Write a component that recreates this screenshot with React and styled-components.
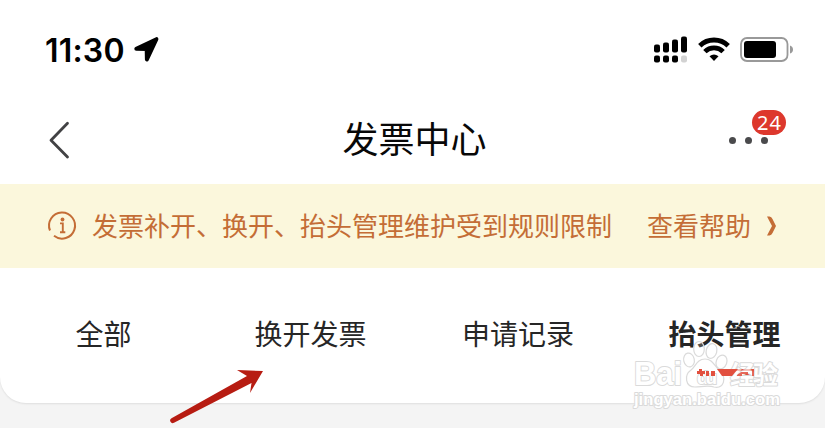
import React from "react";
import styled, { createGlobalStyle } from "styled-components";

const GlobalStyle = createGlobalStyle`
  * { box-sizing: border-box; }
  body {
    margin: 0;
    overflow: hidden;
    background: #f4f4f4;
    font-family: "Noto Sans CJK SC", sans-serif;
  }
`;

const Screen = styled.div`
  position: relative;
  width: 825px;
  height: 428px;
  overflow: hidden;
  background: #f4f4f4;
`;

const Sheet = styled.main`
  height: 403px;
  background: #fff;
  border-radius: 0 0 26px 26px;
  box-shadow: 0 1px 2px rgba(0, 0, 0, 0.09);
`;

const StatusBar = styled.div`
  display: flex;
  align-items: center;
  justify-content: space-between;
  height: 100px;
  padding: 0 31px 1px 45px;
`;

const StatusGroup = styled.div`
  display: flex;
  align-items: center;
`;

const Clock = styled.time`
  width: 80px;
  margin: 2px 9px 0 0;
  font: 600 32px/40px Inter, sans-serif;
  letter-spacing: 0.2px;
  white-space: nowrap;
  color: #000;
`;

const Icon = styled.svg`
  display: block;
  flex: none;
  overflow: visible;
`;

const WifiIcon = styled(Icon)`
  margin: 0 0 2px 11px;
`;

const BatteryIcon = styled(Icon)`
  margin-left: 10px;
`;

const NavBar = styled.header`
  display: grid;
  grid-template-columns: 120px 1fr 120px;
  align-items: center;
  height: 84px;
  padding-bottom: 4px;
`;

const BackButton = styled.button`
  width: 40px;
  margin-left: 48px;
  padding: 0;
  border: 0;
  background: none;
`;

const Title = styled.h1`
  margin: 0 0 6px 4px;
  font-size: 36px;
  font-weight: 400;
  line-height: 50px;
  text-align: center;
  color: #080808;
`;

const MoreButton = styled.button`
  position: relative;
  display: flex;
  gap: 9px;
  width: 60px;
  margin-left: 24px;
  padding: 0;
  border: 0;
  background: none;
`;

const Dot = styled.i`
  width: 7px;
  height: 7px;
  border-radius: 50%;
  background: #4a4a4c;
`;

const Badge = styled.span`
  position: absolute;
  left: 23px;
  top: -27px;
  width: 34px;
  height: 25px;
  border-radius: 13px;
  background: #dd382d;
  color: #fff;
  font: 400 20px/25px "Noto Sans", sans-serif;
  letter-spacing: 1px;
  text-indent: 1px;
  text-align: center;
`;

const Notice = styled.section`
  display: flex;
  align-items: center;
  height: 84px;
  padding-left: 47px;
  background: #fbf7dc;
  color: #c46d36;
  font-size: 26px;
  line-height: 40px;
  white-space: nowrap;
`;

const NoticeText = styled.span`
  width: 520px;
  margin: 0 35px 2px 15px;
`;

const HelpLink = styled.a`
  display: flex;
  align-items: center;
  gap: 16px;
  margin-bottom: 3px;
`;

const HelpChevron = styled(Icon)`
  margin-top: 3px;
`;

const Tabs = styled.nav`
  display: grid;
  grid-template-columns: 207px 207px 208px 205px;
  height: 135px;
  padding-top: 45px;
`;

const Tab = styled.div`
  display: flex;
  flex-direction: column;
  align-items: center;
  font-size: 28px;
  line-height: 40px;
  font-weight: ${(p) => (p.$active ? 700 : 400)};
  color: #262626;
`;

const Underline = styled.span`
  width: 57px;
  height: 7px;
  margin: 16px 0 0 2px;
  background: #e2503f;
`;

const Overlay = styled.svg`
  position: absolute;
  left: 0;
  top: 0;
  pointer-events: none;
`;

const MarkText = styled.text`
  font-family: ${(p) => (p.$cjk ? '"Noto Sans CJK SC"' : '"Liberation Sans"')}, sans-serif;
  font-size: ${(p) => p.$size}px;
  font-weight: 700;
  fill: #fff;
  stroke: #dadada;
  stroke-width: 2px;
  stroke-linejoin: round;
  paint-order: stroke;
`;

const tabs = ["全部", "换开发票", "申请记录", "抬头管理"];

function Signal() {
  const bars = [[0, 8], [9, 10], [18, 13], [27, 16]];
  return (
    <Icon width="33" height="27" viewBox="0 0 33 27">
      {bars.map(([x, h], i) => (
        <g key={x}>
          <rect x={x} y={16.5 - h} width="6" height={h} rx="2" />
          <rect x={x} y="19.5" width="6" height="7" rx="2" fill={i === 3 ? "#d2d2d2" : "#000"} />
        </g>
      ))}
    </Icon>
  );
}

function Wifi() {
  return (
    <WifiIcon width="32" height="24" viewBox="0 0 32 24">
      <g fill="none" stroke="#000" strokeWidth="4.8">
        <path d="M1.8 8.8A20.3 20.3 0 0 1 30.2 8.8" />
        <path d="M6.9 14.6A12.9 12.9 0 0 1 25.1 14.6" />
      </g>
      <path d="M11.5 19.3Q16 15.5 20.5 19.3L16 24Z" />
    </WifiIcon>
  );
}

function Battery() {
  return (
    <BatteryIcon width="54" height="25" viewBox="0 0 54 25">
      <rect x="1" y="1" width="46.5" height="23" rx="6" fill="none" stroke="#999" strokeWidth="1.8" />
      <rect x="4" y="4" width="32" height="17" rx="3" />
      <path d="M50 8.5q3 1 3 4t-3 4z" fill="#999" />
    </BatteryIcon>
  );
}

function Watermark() {
  return (
    <g>
      <MarkText x="634" y="385" $size="34" textLength="48" lengthAdjust="spacingAndGlyphs">Bai</MarkText>
      <g fill="#fff" stroke="#dadada" strokeWidth="1.2">
        <ellipse cx="689" cy="360" rx="5.3" ry="7" transform="rotate(-12 689 360)" />
        <ellipse cx="699" cy="349" rx="5.3" ry="7.5" fillOpacity="0.2" />
        <ellipse cx="711.5" cy="351" rx="5.3" ry="7.5" transform="rotate(14 711.5 351)" fillOpacity="0.2" />
        <ellipse cx="721.5" cy="362" rx="5.3" ry="7" transform="rotate(20 721.5 362)" />
        <path d="M705 359C697 359 696 366 691 370C684 375 685 387 695 387C701 387 708 385 714 387C724 389 727 378 720 371C714 366 713 359 705 359Z" />
      </g>
      <MarkText x="697" y="384" $size="19" textLength="20">du</MarkText>
      <MarkText x="730" y="384" $cjk $size="25" textLength="48">经验</MarkText>
      <MarkText x="634" y="405" $size="17" textLength="146" lengthAdjust="spacingAndGlyphs">jingyan.baidu.com</MarkText>
      <g fill="#e2503f">
        <path d="M697 371h2v-2h3v2h3v3h-2v2h-3v-2h-3zM706 371h3v5h-3zM711 371h4v5h-4z" />
        <path d="M717 369h21l-6 7h-10z" />
        <path d="M737 375l4-3h7v2h-6v2h-5zM752 369h2v7h-2z" fillOpacity="0.85" />
        <path d="M736 369h16v2h-16z" fillOpacity="0.35" />
      </g>
    </g>
  );
}

export default function App() {
  return (
    <Screen>
      <GlobalStyle />
      <Sheet>
        <StatusBar>
          <StatusGroup>
            <Clock>11:30</Clock>
            <Icon width="25" height="25" viewBox="0 0 25 25">
              <path d="M2.3 11.8L22.4 2.2L12.9 22.5L12.7 12Z" stroke="#000" strokeWidth="4" strokeLinejoin="round" />
            </Icon>
          </StatusGroup>
          <StatusGroup><Signal /><Wifi /><Battery /></StatusGroup>
        </StatusBar>
        <NavBar>
          <BackButton aria-label="返回">
            <Icon width="22" height="38" viewBox="0 0 22 38">
              <path d="M19.5 2.2L3 19.2L19.5 36" fill="none" stroke="#424244" strokeWidth="2.8" strokeLinecap="round" strokeLinejoin="round" />
            </Icon>
          </BackButton>
          <Title>发票中心</Title>
          <MoreButton aria-label="更多"><Dot /><Dot /><Dot /><Badge>24</Badge></MoreButton>
        </NavBar>
        <Notice>
          <Icon width="30" height="30" viewBox="0 0 30 30">
            <g transform="translate(1 0)">
              <path d="M2 19.5A13 13 0 1 1 6 24.8" fill="none" stroke="#c46d36" strokeWidth="2" />
              <circle cx="14.5" cy="8.5" r="1.9" fill="#c46d36" />
              <path d="M12 12.4H14.8V21.3M12 21.3H17.3" fill="none" stroke="#c46d36" strokeWidth="1.9" />
            </g>
          </Icon>
          <NoticeText>发票补开、换开、抬头管理维护受到规则限制</NoticeText>
          <HelpLink>
            查看帮助
            <HelpChevron width="10" height="20" viewBox="0 0 10 20">
              <path d="M0 0.5H2.5Q4.5 .8 5.5 3L9 10L5.5 17Q4.5 19.3 2.5 19.5H0L5 10Z" fill="#c46d36" />
            </HelpChevron>
          </HelpLink>
        </Notice>
        <Tabs>
          {tabs.map((label, i) => (
            <Tab key={label} $active={i === 3}>
              {label}
              {i === 3 && <Underline />}
            </Tab>
          ))}
        </Tabs>
      </Sheet>
      <Overlay width="825" height="428" viewBox="0 0 825 428">
        <Watermark />
        <path d="M171.5 418.2L247 376L237 370L263 371L250 393L251.5 383L174 422.7A2.5 2.5 0 0 1 171.5 418.2Z" fill="#b71c12" />
      </Overlay>
    </Screen>
  );
}
